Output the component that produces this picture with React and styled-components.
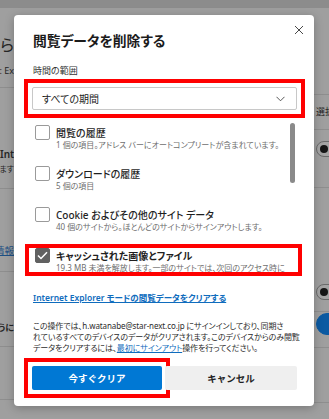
import React from 'react';
import styled, { createGlobalStyle } from 'styled-components';

const GlobalStyle = createGlobalStyle`
  html, body {
    margin: 0;
    padding: 0;
  }
  body {
    font-family: "Noto Sans", "Noto Sans CJK JP", sans-serif;
    font-feature-settings: "palt";
  }
`;

const Page = styled.div`
  position: relative;
  width: 329px;
  height: 419px;
  overflow: hidden;
  background: #9f9f9f;
  display: flex;
  flex-direction: column;
`;
const TopBand = styled.div`
  height: 8px;
  background: #8c8c8c;
  flex-shrink: 0;
`;
const Backdrop = styled.div`
  flex: 1;
  display: flex;
  justify-content: space-between;
`;
const Strip = styled.div`
  width: ${({ w }) => w}px;
  display: flex;
  flex-direction: column;
  overflow: hidden;
`;
const BgRow = styled.div`
  height: ${({ h }) => h}px;
  flex-shrink: 0;
  border-bottom: ${({ line }) => (line ? '1px solid #8e8e8e' : 'none')};
  box-sizing: border-box;
  display: flex;
  flex-direction: column;
  justify-content: flex-start;
`;
const BgText = styled.div`
  display: flex;
  justify-content: ${({ right }) => (right ? 'flex-end' : 'flex-start')};
  white-space: nowrap;
  font-size: ${({ size = 9 }) => size}px;
  line-height: ${({ lh = 12 }) => lh}px;
  color: ${({ color = '#262626' }) => color};
  font-weight: ${({ bold }) => (bold ? 600 : 400)};
  margin-top: ${({ mt = 0 }) => mt}px;
  padding-left: ${({ pl = 0 }) => pl}px;
  text-decoration: ${({ link }) => (link ? 'underline' : 'none')};
`;
const BgToggle = styled.div`
  margin-top: ${({ mt = 0 }) => mt}px;
  margin-left: 2px;
  width: 30px;
  height: ${({ filled }) => (filled ? 22 : 16)}px;
  border-radius: 11px;
  box-sizing: border-box;
  border: 1px solid ${({ filled }) => (filled ? '#0c5aa2' : '#6a6a6a')};
  background: ${({ filled }) => (filled ? '#0c5aa2' : '#a4a4a4')};
  display: flex;
  align-items: center;
  padding-left: 3px;
  &::before {
    content: '';
    display: ${({ filled }) => (filled ? 'none' : 'block')};
    width: 8px;
    height: 8px;
    border-radius: 50%;
    background: #161616;
  }
`;

const Dialog = styled.div`
  position: absolute;
  left: 14px;
  top: 15px;
  width: 300px;
  height: 391px;
  box-sizing: border-box;
  background: #fff;
  border-radius: 4px;
  box-shadow: 0 2px 10px rgba(0, 0, 0, 0.25);
  padding: 17px 17px 0 19px;
  display: flex;
  flex-direction: column;
`;
const CloseButton = styled.button`
  position: absolute;
  right: 9px;
  top: 9px;
  width: 12px;
  height: 12px;
  padding: 0;
  border: none;
  background: none;
  display: flex;
  align-items: center;
  justify-content: center;
`;
const Title = styled.h1`
  margin: 0;
  font-size: 13.8px;
  line-height: 18px;
  font-weight: 600;
  color: #1b1b1b;
`;
const Label = styled.div`
  margin-top: 15px;
  font-size: 9px;
  line-height: 12px;
  color: #333;
`;
/* red annotation frame drawn around a part of the dialog */
const Marked = styled.div`
  outline: 4px solid #ff0000;
  outline-offset: 4px;
  border-radius: 0;
`;
const SelectFrame = styled(Marked)`
  margin: 10px 0 0 -1px;
`;
const Select = styled.div`
  height: 23px;
  box-sizing: border-box;
  border: 1px solid #c8c8c8;
  border-radius: 2px;
  display: flex;
  align-items: center;
  justify-content: space-between;
  padding: 0 11px 0 9px;
  font-size: 10px;
  color: #222;
`;
const ListArea = styled.div`
  position: relative;
  margin: 15px 0 0 -4px;
  width: 269px;
  display: flex;
  flex-direction: column;
`;
const Scrollbar = styled.div`
  position: absolute;
  left: 261px;
  top: -2px;
  width: 5px;
  height: 60px;
  border-radius: 3px;
  background: #8a8a8a;
`;
const Item = styled.div`
  height: ${({ h }) => h}px;
  overflow: hidden;
  display: grid;
  grid-template-columns: 15px 1fr;
  column-gap: 6px;
  padding: 0 9px 0 6px;
  box-sizing: border-box;
  outline: ${({ marked }) => (marked ? '4px solid #ff0000' : 'none')};
`;
const Box = styled.div`
  width: 15px;
  height: 15px;
  box-sizing: border-box;
  border-radius: 2px;
  border: 1px solid ${({ checked }) => (checked ? '#616161' : '#9a9a9a')};
  background: ${({ checked }) => (checked ? '#616161' : '#fff')};
  display: flex;
  align-items: center;
  justify-content: center;
`;
const ItemText = styled.div`
  padding-top: 1px;
`;
const ItemTitle = styled.div`
  font-size: 10px;
  line-height: 14px;
  font-weight: ${({ bold }) => (bold ? 700 : 500)};
  color: #1f1f1f;
`;
const ItemDesc = styled.div`
  font-size: 8px;
  line-height: 10px;
  color: #6e6e6e;
`;
const Link = styled.a`
  color: #0f6cbd;
  text-decoration: underline;
  cursor: pointer;
`;
const IeLink = styled(Link)`
  display: block;
  margin-top: 20px;
  font-size: 8.5px;
  line-height: 12px;
  font-weight: 600;
`;
const Note = styled.p`
  margin: 16px -3px 0 0;
  font-size: 8px;
  line-height: 11px;
  letter-spacing: -0.1px;
  color: #2b2b2b;
`;
const Buttons = styled.div`
  margin: 13px 0 0 -1px;
  display: grid;
  grid-template-columns: 130px 1fr;
  column-gap: 3px;
`;
const Button = styled.button`
  width: 100%;
  height: 24px;
  display: block;
  border: none;
  border-radius: 2px;
  font-family: inherit;
  font-size: 9.5px;
  font-weight: 700;
  background: ${({ primary }) => (primary ? '#0078d4' : '#efefef')};
  color: ${({ primary }) => (primary ? '#fff' : '#1f1f1f')};
`;

const items = [
  { title: '閲覧の履歴', desc: '1 個の項目。アドレス バーにオートコンプリートが含まれています。' },
  { title: 'ダウンロードの履歴', desc: '5 個の項目' },
  { title: 'Cookie およびその他のサイト データ', desc: '40 個のサイトから。ほとんどのサイトからサインアウトします。' },
  {
    title: 'キャッシュされた画像とファイル',
    desc: '19.3 MB 未満を解放します。一部のサイトでは、次回のアクセス時に読み込みが遅くなる可能性があります。',
    checked: true,
  },
];

const App = () => (
  <>
    <GlobalStyle />
    <Page>
      <TopBand />
      <Backdrop>
        <Strip w={14}>
          <BgRow h={80} line>
            <BgText right size={16} lh={20} mt={27}>ら</BgText>
            <BgText right size={9} mt={10}>の設定: Ex</BgText>
          </BgRow>
          <BgRow h={101} line>
            <BgText size={10} bold mt={60}>Internet</BgText>
            <BgText right size={8} lh={10} mt={4}>ります</BgText>
          </BgRow>
          <BgRow h={83} line>
            <BgText right size={9.5} link color="#1d4f84" mt={56}>詳細情報</BgText>
          </BgRow>
          <BgRow h={75} line>
            <BgText right size={9} bold mt={50}>るように</BgText>
          </BgRow>
          <BgRow h={53} line />
        </Strip>
        <Strip w={15}>
          <BgRow h={87} line />
          <BgRow h={35} line>
            <BgText size={9} pl={2} mt={11}>選択</BgText>
          </BgRow>
          <BgRow h={58} line>
            <BgToggle mt={11} />
          </BgRow>
          <BgRow h={124} line>
            <BgToggle mt={96} />
          </BgRow>
          <BgRow h={36} line>
            <BgToggle filled mt={1} />
          </BgRow>
          <BgRow h={55} line />
        </Strip>
      </Backdrop>

      <Dialog>
        <CloseButton>
          <svg width="10" height="10" viewBox="0 0 10 10">
            <path d="M1 1 L9 9 M9 1 L1 9" stroke="#333" strokeWidth="0.9" fill="none" />
          </svg>
        </CloseButton>
        <Title>閲覧データを削除する</Title>
        <Label>時間の範囲</Label>
        <SelectFrame>
          <Select>
            <span>すべての期間</span>
            <svg width="9" height="6" viewBox="0 0 9 6">
              <path d="M0.5 0.8 L4.5 4.8 L8.5 0.8" stroke="#444" strokeWidth="0.9" fill="none" />
            </svg>
          </Select>
        </SelectFrame>
        <ListArea>
          <Scrollbar />
          {items.map((it, i) => (
            <Item key={i} h={it.checked ? 24 : 41} marked={it.checked}>
              <Box checked={it.checked}>
                {it.checked && (
                  <svg width="11" height="9" viewBox="0 0 11 9">
                    <path d="M1 4.5 L4 7.5 L10 1.2" stroke="#fff" strokeWidth="1.5" fill="none" />
                  </svg>
                )}
              </Box>
              <ItemText>
                <ItemTitle bold={it.checked}>{it.title}</ItemTitle>
                <ItemDesc>{it.desc}</ItemDesc>
              </ItemText>
            </Item>
          ))}
        </ListArea>
        <IeLink>Internet Explorer モードの閲覧データをクリアする</IeLink>
        <Note>
          この操作では、h.watanabe@star-next.co.jp にサインインしており、同期さ<br />
          れているすべてのデバイスのデータがクリアされます。このデバイスからのみ閲覧<br />
          データをクリアするには、<Link>最初にサインアウト</Link>操作を行ってください。
        </Note>
        <Buttons>
          <Marked>
            <Button primary>今すぐクリア</Button>
          </Marked>
          <Button>キャンセル</Button>
        </Buttons>
      </Dialog>
    </Page>
  </>
);

export default App;
